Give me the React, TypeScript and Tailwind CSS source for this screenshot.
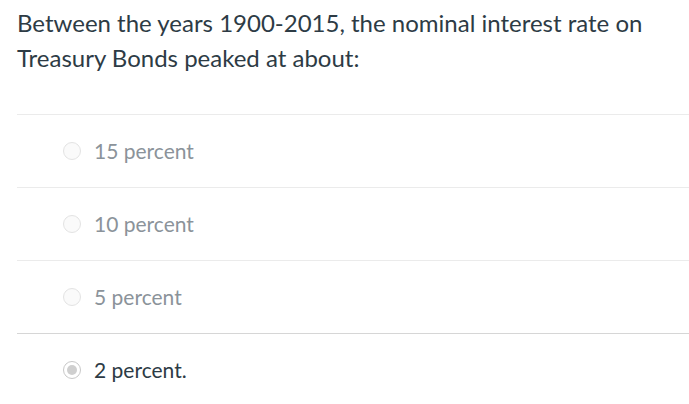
const options = [
  { label: '15 percent', selected: false, border: 'border-[#ebebeb]' },
  { label: '10 percent', selected: false, border: 'border-[#ebebeb]' },
  { label: '5 percent', selected: false, border: 'border-[#ebebeb]' },
  { label: '2 percent.', selected: true, border: 'border-[#d6d6d6]' },
];

function Radio({ selected }: { selected: boolean }) {
  if (selected) {
    return (
      <span className="flex h-[18px] w-[18px] shrink-0 items-center justify-center rounded-full border border-[#c8c8c8] bg-white">
        <span className="h-[10px] w-[10px] rounded-full bg-[#cfcfcf]" />
      </span>
    );
  }
  return <span className="h-[18px] w-[18px] shrink-0 rounded-full border border-[#e3e3e3] bg-[#fafafa]" />;
}

export default function App() {
  return (
    <div className="h-[404px] w-[689px] overflow-hidden bg-white pl-[17px] font-['Lato','Liberation_Sans',sans-serif] text-[#2d3b45]">
      <p className="pt-[5px] pr-[30px] text-[24px] leading-[35px]">
        Between the years 1900-2015, the nominal interest rate on Treasury Bonds peaked at about:
      </p>
      <div className="mt-[39px]">
        {options.map((o) => (
          <div key={o.label} className={`flex h-[73px] items-center border-t ${o.border} pl-[46px]`}>
            <Radio selected={o.selected} />
            <span className={`ml-[13px] text-[21px] ${o.selected ? 'text-[#2d3b45]' : 'text-[#8b939a]'}`}>
              {o.label}
            </span>
          </div>
        ))}
      </div>
    </div>
  );
}
